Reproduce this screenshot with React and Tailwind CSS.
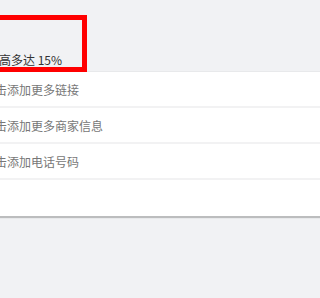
export default function App() {
  const rows = ["点击添加更多链接", "点击添加更多商家信息", "点击添加电话号码", ""];
  return (
    <div
      className="relative w-full h-[298px] overflow-hidden bg-[#f1f2f4]"
      style={{ fontFamily: '"Noto Sans CJK SC", "Noto Sans", sans-serif' }}
    >
      <div className="h-[72px] flex items-end pb-[4px]">
        <span className="ml-[-13px] text-[12px] leading-[17px] text-[#333]">最高多达 15%</span>
      </div>
      <div className="-mx-[10px] bg-white shadow-[0_1px_1px_1px_rgba(0,0,0,0.22)]">
        {rows.map((t, i) => (
          <div
            key={i}
            className={
              "h-[36px] flex items-center " +
              (i < 3 ? "border-b-2 border-[#f2f2f3]" : "")
            }
          >
            <span className="ml-[-7px] text-[12px] leading-[17px] text-[#777]">{t}</span>
          </div>
        ))}
      </div>
      <div className="absolute left-[-20px] top-[15px] w-[107px] h-[57px] border-[5px] border-[#ff0000]" />
    </div>
  );
}
